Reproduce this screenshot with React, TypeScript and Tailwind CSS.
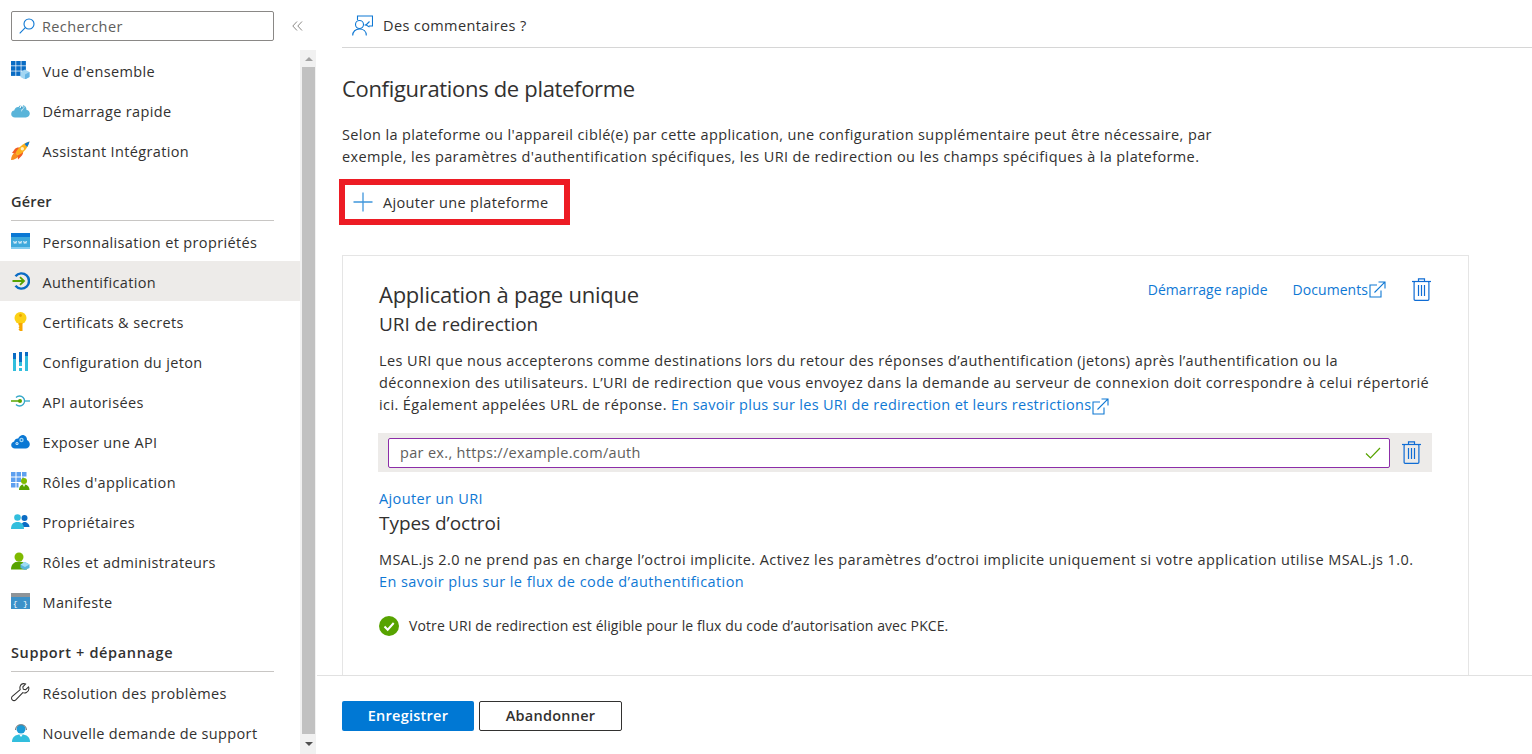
import React from "react";

const Txt = "text-[#323130]";

const Grid = () => (
  <svg width="19" height="18" viewBox="0 0 19 18">
    <g fill="#0a6cc4">
      <rect x="0" y="0" width="4.500" height="4.500" /><rect x="5.200" y="0" width="4.500" height="4.500" /><rect x="10.400" y="0" width="4.500" height="4.500" />
      <rect x="0" y="5.200" width="4.500" height="4.500" /><rect x="5.200" y="5.200" width="4.500" height="4.500" /><rect x="10.400" y="5.200" width="4.500" height="4.500" />
      <rect x="0" y="10.400" width="4.500" height="4.500" /><rect x="5.200" y="10.400" width="4.500" height="4.500" />
    </g>
    <path d="M9.500 11l4.500-2.500 4.500 2.500v5L14 18.500 9.500 16z" fill="#a4d6f2" />
    <path d="M14 13.500v5l4.500-2.500v-5z" fill="#66b4e3" />
  </svg>
);
const CloudBolt = () => (
  <svg width="19" height="15" viewBox="0 0 19 15">
    <path d="M4 14.500C1.700 14.500.2 13 .2 11c0-1.800 1.200-3.200 3-3.400C3.600 5.300 5.500 3.700 7.600 4 8.800 2 11.500 1.500 13.500 2.800c1.400.9 2 2.300 1.900 3.900 2 .3 3.400 1.900 3.400 3.900 0 2.200-1.700 3.900-3.900 3.900z" fill="#59b4d9" />
    <path d="M10.500 0L8.500 5h2.700L10 9l3.900-5.200h-2.500L13 0z" fill="#fff" />
    <path d="M10.700 2.500L9.500 5.400h2.200l-.6 1.800 1.900-3h-2z" fill="#3999c6" />
  </svg>
);
const Rocket = () => (
  <svg width="19" height="19" viewBox="0 0 19 19">
    <path d="M0 19C.2 15.500 1.500 12.800 4 11.500l3.500 3.500C6.200 17.500 3.500 18.800 0 19z" fill="#f78d1e" />
    <path d="M3.500 8.500C5 6.800 7 6.300 9 6.800L5.500 12.500 1 12z" fill="#f15a24" />
    <path d="M12 10c.5 2-.2 3.800-2 5.500L7 18.500l-.5-4.500z" fill="#f15a24" />
    <path d="M4.500 12C7 6.500 12 2.500 18.500.5 17 6.500 13 11.500 7 14.500z" fill="#fcb11c" />
    <path d="M13.500 3C15 2 17 1 18.500.5 18 2.500 17.200 4.300 16.200 6z" fill="#0a78d4" />
    <circle cx="11.300" cy="7.700" r="1.700" fill="#fff3c4" />
  </svg>
);
const Www = () => (
  <svg width="19" height="16" viewBox="0 0 19 16">
    <rect x="0" y="0" width="19" height="16" fill="#3ea9dc" />
    <rect x="0" y="0" width="19" height="4" fill="#0a78d4" />
    <rect x="0" y="14" width="19" height="2" fill="#83cdf0" />
    <path d="M2.500 8l.8 2.500.8-2 .8 2 .8-2.500M7.500 8l.8 2.500.8-2 .8 2 .8-2.500M12.500 8l.8 2.500.8-2 .8 2 .8-2.500" stroke="#fff" strokeWidth=".7" fill="none" />
  </svg>
);
const AuthIcon = () => (
  <svg width="18" height="18" viewBox="0 0 18 18" fill="none">
    <path d="M3.500 4.200A7.600 7.600 0 1 1 3.500 13.800" stroke="#0a6cc4" strokeWidth="2.400" />
    <path d="M0.500 9h11M8 5.200L12 9l-4 3.800" stroke="#57a300" strokeWidth="1.800" />
  </svg>
);
const Key = () => (
  <svg width="13" height="19" viewBox="0 0 13 19">
    <circle cx="6.500" cy="6" r="6" fill="#fcd116" />
    <circle cx="6.500" cy="3.500" r="1.400" fill="#e8a200" />
    <path d="M4.500 11h4v8H6L4.500 17.500l1-1.200-1-1 1-1.200-1-1z" fill="#f7a600" />
  </svg>
);
const Bars = () => (
  <svg width="15" height="19" viewBox="0 0 15 19">
    <rect x="0" y="1" width="3" height="18" fill="#32bedd" /><rect x="0" y="1" width="3" height="6" fill="#0a6cc4" />
    <rect x="6" y="0" width="3" height="14" fill="#32bedd" /><rect x="6" y="0" width="3" height="10" fill="#0a6cc4" /><rect x="6" y="16" width="3" height="3" fill="#32bedd" />
    <rect x="12" y="0" width="3" height="19" fill="#32bedd" /><rect x="12" y="0" width="3" height="4" fill="#0a6cc4" />
  </svg>
);
const Api = () => (
  <svg width="19" height="12" viewBox="0 0 19 12" fill="none">
    <path d="M5 2.500A5 5 0 1 1 5 9.500" stroke="#32a6c8" strokeWidth="1.300" />
    <path d="M14 6h5" stroke="#32a6c8" strokeWidth="1.300" />
    <path d="M0 6h10" stroke="#57a300" strokeWidth="1.500" />
    <circle cx="9" cy="6" r="2" fill="#57a300" />
  </svg>
);
const CloudGear = () => (
  <svg width="19" height="15" viewBox="0 0 19 15">
    <path d="M4 14.500C1.800 14.500.2 13 .2 11c0-1.800 1.300-3.200 3-3.500C3.600 5.500 5.500 4.300 7.200 4.600 8.200 2 10.800.5 13 1.200c2 .6 3.200 2.600 3 4.800 1.700.8 2.800 2.500 2.800 4.300 0 2.400-1.900 4.200-4.300 4.200z" fill="#0a78d4" />
    <circle cx="10.500" cy="6" r="2.200" fill="#9fd4f3" /><circle cx="10.500" cy="6" r=".9" fill="#0a78d4" />
    <circle cx="6" cy="9.500" r="1.500" fill="#d5ecfa" /><circle cx="6" cy="9.500" r=".6" fill="#0a78d4" />
  </svg>
);
const RolesApp = () => (
  <svg width="19" height="18" viewBox="0 0 19 18">
    <g fill="#5ea0ef">
      <rect x="0" y="0" width="4.500" height="4.500" /><rect x="5.500" y="0" width="4.500" height="4.500" /><rect x="11" y="0" width="4.500" height="4.500" />
      <rect x="0" y="5.500" width="4.500" height="4.500" /><rect x="5.500" y="5.500" width="4.500" height="4.500" /><rect x="11" y="5.500" width="2" height="2" />
      <rect x="0" y="11" width="4.500" height="4.500" /><rect x="5.500" y="11" width="2" height="4.500" />
    </g>
    <circle cx="13" cy="9" r="3" fill="#7fba00" />
    <path d="M8 18c0-3.500 2-5.500 5-5.500s5.500 2 5.500 5.500z" fill="#57a300" />
    <path d="M11.800 12.500L13 15l1.200-2.500z" fill="#fff" />
  </svg>
);
const Owners = () => (
  <svg width="19" height="15" viewBox="0 0 19 15">
    <circle cx="13.500" cy="4" r="3" fill="#0a6cc4" />
    <path d="M10 13c0-3 1.500-5 3.500-5s5 2 5 5z" fill="#0a6cc4" />
    <circle cx="6.500" cy="3.500" r="3.300" fill="#32bedd" />
    <path d="M0 15c0-4.500 2.500-7 6.500-7s6.500 2.500 6.500 7z" fill="#32bedd" />
  </svg>
);
const RolesAdmin = () => (
  <svg width="19" height="18" viewBox="0 0 19 18">
    <circle cx="8" cy="5" r="4.500" fill="#7fba00" />
    <path d="M0 17.500c0-5 3-8 8-8s8 3 8 8z" fill="#57a300" />
    <path d="M9.500 12.500l4.500-2.500 4.500 2.500v3.500L14 18l-4.500-2z" fill="#59b4d9" />
    <path d="M9.500 12.500L14 15l4.500-2.500L14 10z" fill="#9fdcf5" />
  </svg>
);
const Manifest = () => (
  <svg width="19" height="16" viewBox="0 0 19 16">
    <rect width="19" height="16" fill="#3c91c9" />
    <rect width="19" height="4" fill="#8f9498" />
    <text x="9.500" y="12.500" fontSize="8" fill="#fff" textAnchor="middle" fontFamily="Liberation Mono, monospace">{"{ }"}</text>
  </svg>
);
const Wrench = () => (
  <svg width="19" height="19" viewBox="0 0 19 19" fill="none">
    <path d="M18 3.500l-3 3-2.500-.5-.5-2.500 3-3c-2.500-.8-5 .2-5.800 2.500-.4 1.200-.3 2.300.1 3.300L1 13.500c-1 1-1 2.500 0 3.500s2.700 1 3.700 0L12 9.500c1.200.5 2.500.5 3.700-.1 2-1 3-3.500 2.300-5.900z" transform="translate(.3 .5) scale(.96)" stroke="#323130" strokeWidth="1.100" strokeLinejoin="round" />
  </svg>
);
const SupportIcon = () => (
  <svg width="18" height="19" viewBox="0 0 18 19">
    <path d="M0 19c0-5 3-7.500 9-7.500s9 2.500 9 7.500z" fill="#32bedd" />
    <circle cx="9" cy="6" r="4.500" fill="#1a9bd7" />
    <path d="M3.500 7c0-7 11-7 11 0" fill="none" stroke="#7a7a7a" strokeWidth="1.100" />
    <path d="M7.200 11.500L9 14l1.800-2.500z" fill="#fff" />
  </svg>
);

const Search = () => (
  <svg width="16" height="16" viewBox="0 0 16 16" fill="none" stroke="#0f78d4" strokeWidth="1.100">
    <circle cx="10" cy="6" r="5" />
    <path d="M6.300 9.700L.7 15.300" />
  </svg>
);
const ChevronsLeft = () => (
  <svg width="11" height="10" viewBox="0 0 11 10" fill="none" stroke="#8a8886" strokeWidth="1">
    <path d="M5 .5L.8 5 5 9.500M10 .5L5.800 5 10 9.500" />
  </svg>
);
const Feedback = () => (
  <svg width="21" height="21" viewBox="0 0 21 21" fill="none" stroke="#0f78d4" strokeWidth="1.100">
    <path d="M5.500 5V1h15v10h-3.500" />
    <path d="M17.500 6.500l-3.500 3.500 3.500 2" />
    <path d="M14 10h-1.500" />
    <circle cx="7.500" cy="9.500" r="4" />
    <path d="M.7 20.500c0-4 2.800-6.500 6.800-6.500s6.800 2.500 6.800 6.500" />
  </svg>
);
const Plus = () => (
  <svg width="20" height="20" viewBox="0 0 20 20" stroke="#3f96dc" strokeWidth="1.300"><path d="M10 .5v19M.5 10h19" /></svg>
);
const Trash = () => (
  <svg width="19" height="23" viewBox="0 0 19 23" fill="none" stroke="#0f6cd4" strokeWidth="1.200">
    <path d="M0 3.500h19" />
    <path d="M6.500 3V.8h6V3" />
    <rect x="2.100" y="3.500" width="14.800" height="18.800" rx="1" />
    <path d="M6.500 7v11M9.500 7v11M12.500 7v11" />
  </svg>
);
const External = () => (
  <svg width="17" height="17" viewBox="0 0 17 17" fill="none" stroke="#0f78d4" strokeWidth="1.100" className="inline-block">
    <path d="M8 4H1v12h11V9.500" />
    <path d="M5.500 11.500L15.800 1.200M9.500 1h6.500v6.500" />
  </svg>
);

const Item = ({ icon, label, active }: { icon: React.ReactNode; label: string; active?: boolean }) => (
  <div className={`flex h-10 items-center pl-[11px] ${active ? "bg-[#edebe9]" : ""}`}>
    <span className="flex w-[19px] justify-center shrink-0">{icon}</span>
    <span className={`ml-[12.5px] whitespace-nowrap pt-[4px] tracking-[0.35px] ${Txt}`}>{label}</span>
  </div>
);

export default function App() {
  return (
    <div
      className={`flex h-[754px] w-[1532px] overflow-hidden bg-white ${Txt} text-[14.5px] tracking-[0.38px]`}
      style={{ fontFamily: '"Open Sans", "Noto Sans", sans-serif' }}
    >
      <aside className="flex w-[317px] shrink-0">
        <div className="w-[300px] shrink-0">
          <div className="flex h-[50px] items-start pt-[11px]">
            <div className="ml-[11px] flex h-[30px] w-[263px] shrink-0 items-center rounded-[2px] border border-[#8a8886] pl-[7px]">
              <Search />
              <span className="ml-[7px] pt-[1px] text-[#605e5c]">Rechercher</span>
            </div>
            <span className="ml-[18px] mt-[10px] flex shrink-0"><ChevronsLeft /></span>
          </div>
          <Item icon={<Grid />} label="Vue d'ensemble" />
          <Item icon={<CloudBolt />} label="Démarrage rapide" />
          <Item icon={<Rocket />} label="Assistant Intégration" />
          <div className="ml-[11px] mr-[26px] mt-[22px] h-[29px] border-b border-[#c8c6c4] font-semibold leading-[20px] tracking-[0.2px]">Gérer</div>
          <Item icon={<Www />} label="Personnalisation et propriétés" />
          <Item icon={<AuthIcon />} label="Authentification" active />
          <Item icon={<Key />} label="Certificats & secrets" />
          <Item icon={<Bars />} label="Configuration du jeton" />
          <Item icon={<Api />} label="API autorisées" />
          <Item icon={<CloudGear />} label="Exposer une API" />
          <Item icon={<RolesApp />} label="Rôles d'application" />
          <Item icon={<Owners />} label="Propriétaires" />
          <Item icon={<RolesAdmin />} label="Rôles et administrateurs" />
          <Item icon={<Manifest />} label="Manifeste" />
          <div className="ml-[11px] mr-[26px] mt-[22px] h-[29px] border-b border-[#c8c6c4] font-semibold leading-[20px] tracking-[0.65px]">Support + dépannage</div>
          <Item icon={<Wrench />} label="Résolution des problèmes" />
          <Item icon={<SupportIcon />} label="Nouvelle demande de support" />
        </div>
        <div className="mt-[50px] flex h-[704px] w-[16px] shrink-0 flex-col items-end bg-[#f1f1f1] pr-[1px]">
          <div className="flex h-[17px] w-[13px] items-center justify-center">
            <div className="h-0 w-0 border-x-[4px] border-b-[4px] border-x-transparent border-b-[#a3a3a3]" />
          </div>
          <div className="h-[667px] w-[13px] bg-[#c1c1c1]" />
          <div className="flex h-[20px] w-[13px] items-center justify-center">
            <div className="h-0 w-0 border-x-[4px] border-t-[4px] border-x-transparent border-t-[#505050]" />
          </div>
        </div>
      </aside>

      <main className="flex min-w-0 flex-1 flex-col">
        <div className="ml-[25px] flex h-[48px] shrink-0 items-center border-b border-[#d6d6d6] pl-[10px] pt-[4px]">
          <Feedback />
          <span className="ml-[10px] pt-[1px]">Des commentaires ?</span>
        </div>
        <div className="min-h-0 flex-1 overflow-hidden pl-[25px]">
          <h1 className="mt-[25px] text-[22px] leading-[30px] font-normal tracking-[-0.32px]">Configurations de plateforme</h1>
          <p className="mt-[21px] leading-[22px] whitespace-nowrap">
            Selon la plateforme ou l'appareil ciblé(e) par cette application, une configuration supplémentaire peut être nécessaire, par<br />
            exemple, les paramètres d'authentification spécifiques, les URI de redirection ou les champs spécifiques à la plateforme.
          </p>
          <div className="-ml-[3px] mt-[11px] flex h-[46px] w-[231px] items-center border-[6px] border-[#ed1c24] pl-[8px]">
            <Plus />
            <span className="ml-[10px] pt-[2px] tracking-[0.33px]">Ajouter une plateforme</span>
          </div>
          <section className="mt-[30px] h-[500px] w-[1127px] border border-[#e5e5e5] pl-[36px] pr-[37px] pt-[23px]">
            <div className="flex items-start justify-between">
              <div>
                <h2 className="text-[22px] leading-[30px] tracking-[-0.25px]">Application à page unique</h2>
                <h3 className="mt-[1px] text-[19px] leading-[28px] tracking-[-0.05px]">URI de redirection</h3>
              </div>
              <div className="-mt-[1px] flex items-center text-[14px] tracking-[0.05px] text-[#0f78d4]">
                <span>Démarrage rapide</span>
                <span className="ml-[25px]">Documents</span>
                <span className="ml-[1px] flex"><External /></span>
                <span className="ml-[26px] flex"><Trash /></span>
              </div>
            </div>
            <p className="mt-[12px] leading-[22px] whitespace-nowrap tracking-[0.39px]">
              Les URI que nous accepterons comme destinations lors du retour des réponses d’authentification (jetons) après l’authentification ou la<br />
              déconnexion des utilisateurs. L’URI de redirection que vous envoyez dans la demande au serveur de connexion doit correspondre à celui répertorié<br />
              ici. Également appelées URL de réponse. <span className="tracking-[0.3px] text-[#0f78d4]">En savoir plus sur les URI de redirection et leurs restrictions<span className="ml-[1px] inline-block align-[0px]"><External /></span></span>
            </p>
            <div className="-mx-[1px] mt-[17px] flex h-[39px] items-center bg-[#edebe9] pl-[10px]">
              <div className="flex h-[30px] w-[1002px] items-center justify-between rounded-[2px] border border-[#8c2da8] bg-white pl-[11px] pr-[8px] tracking-[0.32px] text-[#605e5c]">
                <span>par ex., https://example.com/auth</span>
                <svg width="16" height="12" viewBox="0 0 16 12" fill="none" stroke="#57a300" strokeWidth="1.200"><path d="M1 6.500L5.500 11 15 1" /></svg>
              </div>
              <span className="ml-[12px] flex"><Trash /></span>
            </div>
            <div className="mt-[16px] leading-[22px] text-[#0f78d4]">Ajouter un URI</div>
            <h3 className="-mt-[1px] text-[19px] leading-[28px] tracking-[-0.05px]">Types d’octroi</h3>
            <p className="mt-[12px] leading-[22px] whitespace-nowrap tracking-[0.43px]">
              MSAL.js 2.0 ne prend pas en charge l’octroi implicite. Activez les paramètres d’octroi implicite uniquement si votre application utilise MSAL.js 1.0.<br />
              <span className="text-[#0f78d4]">En savoir plus sur le flux de code d’authentification</span>
            </p>
            <div className="mt-[22px] flex items-center">
              <svg width="20" height="20" viewBox="0 0 20 20"><circle cx="10" cy="10" r="10" fill="#57a300" /><path d="M5.500 10.500L8.700 13.700 14.700 7" fill="none" stroke="#fff" strokeWidth="2" /></svg>
              <span className="ml-[10px] whitespace-nowrap text-[14px] tracking-[0.1px]">Votre URI de redirection est éligible pour le flux du code d’autorisation avec PKCE.</span>
            </div>
          </section>
        </div>
        <div className="flex h-[79px] shrink-0 items-start gap-[5px] border-t border-[#e1e1e1] pl-[25px] pt-[25px] tracking-[0.25px]">
          <button className="h-[30px] w-[132px] rounded-[2px] bg-[#0078d4] font-semibold text-white">Enregistrer</button>
          <button className="h-[30px] w-[143px] rounded-[2px] border border-[#323130] bg-white font-semibold text-[#323130]">Abandonner</button>
        </div>
      </main>
    </div>
  );
}
